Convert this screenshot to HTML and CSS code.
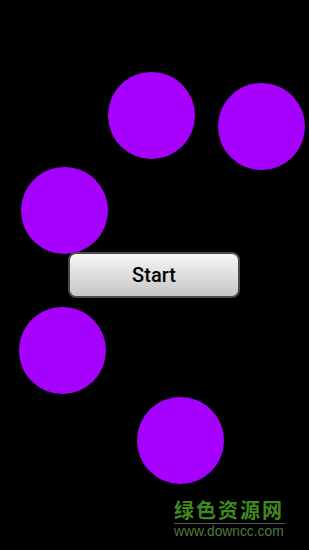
FILE: index.html
```html
<!DOCTYPE html>
<html lang="en">
<head>
<meta charset="UTF-8">
<meta name="viewport" content="width=device-width, initial-scale=1.0">
<title>Balls</title>
<link rel="stylesheet" href="styles.css">
</head>
<body>
<div class="stage">
    <div class="ball" style="left: 108px; top: 72px;"></div>
    <div class="ball" style="left: 218px; top: 83px;"></div>
    <div class="ball" style="left: 21px; top: 167px;"></div>
    <div class="ball" style="left: 19px; top: 307px;"></div>
    <div class="ball" style="left: 137px; top: 397px;"></div>

    <button class="start-btn">Start</button>

    <div class="watermark">
        <div class="wm-title">绿色资源网</div>
        <div class="wm-url">www.downcc.com</div>
    </div>
</div>
</body>
</html>
```

FILE: styles.css
```css
body {
    margin: 0;
    background-color: black;
    font-family: Roboto, "Liberation Sans", sans-serif;
}

.stage {
    position: relative;
    width: 309px;
    height: 550px;
    overflow: hidden;
    display: flex;
    flex-direction: column;
    align-items: center;
}

.ball {
    position: absolute;
    width: 87px;
    height: 87px;
    border-radius: 50%;
    background-color: #a600ff;
}

.start-btn {
    position: relative;
    margin-top: 252px;
    margin-left: -1px;
    width: 172px;
    height: 46px;
    border: 2px solid #4a4a4a;
    border-radius: 8px;
    background: linear-gradient(#f6f6f6, #dedede 50%, #c6c6c6);
    color: #000;
    font-family: Roboto, "Liberation Sans", sans-serif;
    font-weight: 500;
    font-size: 20px;
    padding: 0;
}

.watermark {
    position: absolute;
    left: 174px;
    top: 498px;
    width: 111px;
}

.wm-title {
    font-family: "Noto Sans CJK SC", sans-serif;
    font-weight: bold;
    font-size: 20px;
    line-height: 24px;
    color: #3e8a1e;
    letter-spacing: 2px;
    border-bottom: 1px solid #5a5a5a;
    padding-bottom: 1px;
}

.wm-url {
    font-family: "Liberation Sans", sans-serif;
    font-size: 13.8px;
    line-height: 16px;
    white-space: nowrap;
    color: #4e7a3a;
}
```
